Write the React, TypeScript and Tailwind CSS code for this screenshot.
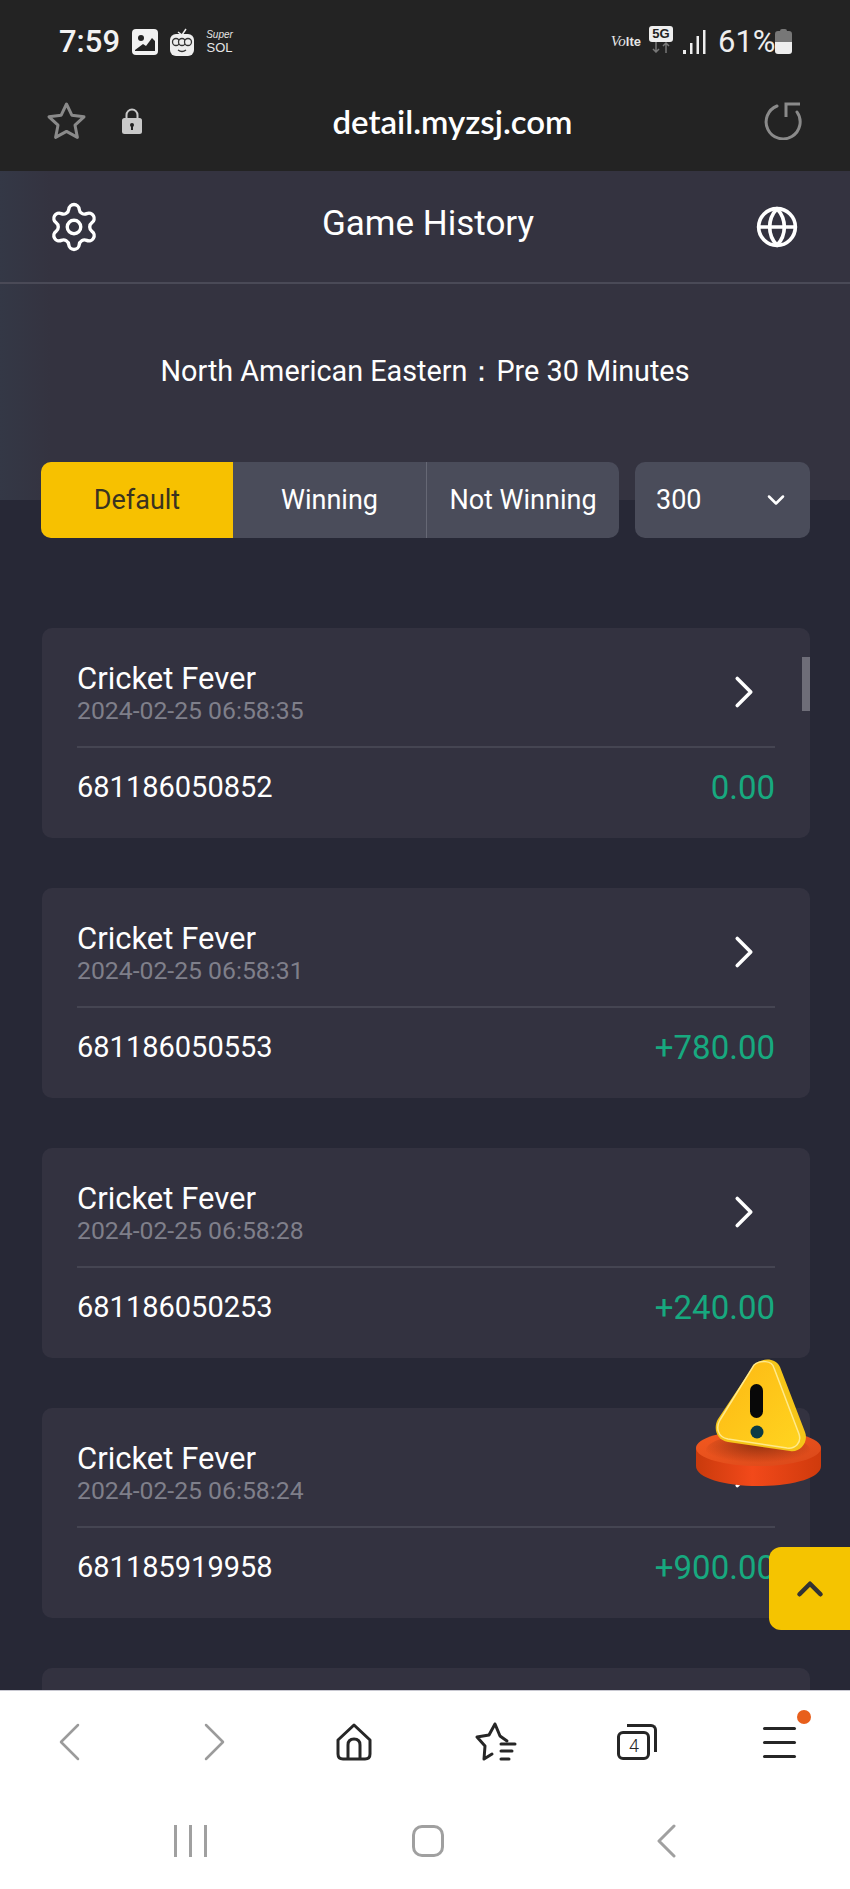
import React from 'react';
import { ChevronDown, ChevronRight, ChevronUp, Globe, Settings } from 'lucide-react';

const records = [
  { time: '2024-02-25 06:58:35', id: '681186050852', amount: '0.00' },
  { time: '2024-02-25 06:58:31', id: '681186050553', amount: '+780.00' },
  { time: '2024-02-25 06:58:28', id: '681186050253', amount: '+240.00' },
  { time: '2024-02-25 06:58:24', id: '681185919958', amount: '+900.00' },
];

const StatusBar = () => (
  <div className="flex h-[81px] items-start justify-between pl-[59px] pr-[58px] pt-[27px] text-white">
    <div className="flex items-center">
      <span className="w-[62px] text-[31px] leading-[30px] font-medium text-[#f2f2f2]">7:59</span>
      <svg className="ml-[11px]" width="26" height="26" viewBox="0 0 26 26">
        <rect width="26" height="26" rx="4" fill="#f1f1f1" />
        <circle cx="9" cy="9" r="3" fill="#222" />
        <path d="M3 21 L11 15 L14 17 L20 9 L23 12 V22 H3 Z" fill="#222" />
      </svg>
      <svg className="ml-[12px]" width="24" height="28" viewBox="0 0 24 28">
        <path d="M8 4 L12 7 L16 1" stroke="#eee" strokeWidth="1.5" fill="none" />
        <rect y="6" width="24" height="22" rx="6" fill="#eee" />
        <circle cx="6" cy="14" r="3.5" fill="#eee" stroke="#333" strokeWidth="1.3" />
        <circle cx="12" cy="14" r="3.5" fill="#eee" stroke="#333" strokeWidth="1.3" />
        <circle cx="18" cy="14" r="3.5" fill="#eee" stroke="#333" strokeWidth="1.3" />
        <path d="M8 22 Q12 25 16 22" stroke="#333" strokeWidth="1.3" fill="none" />
      </svg>
      <div className="ml-[12px] flex w-[27px] flex-col items-center font-['Liberation_Sans',sans-serif] text-[#e6e6e6]">
        <span className="text-[10px] leading-[12px] italic">Super</span>
        <span className="text-[13px] leading-[14px]">SOL</span>
      </div>
    </div>
    <div className="flex items-start">
      <div className="mt-[6px] flex items-baseline font-['Liberation_Serif',serif] text-[#e6e6e6]">
        <span className="text-[15px] leading-[16px] italic">Vo</span>
        <span className="font-['Liberation_Sans',sans-serif] text-[13px] leading-[16px] font-bold">lte</span>
      </div>
      <div className="ml-[8px] -mt-[1px] flex w-[24px] flex-col items-center">
        <span className="flex h-[16px] w-[24px] items-center justify-center rounded-[3px] bg-[#eee] font-['Liberation_Sans',sans-serif] text-[13px] leading-[16px] font-bold text-[#222]">5G</span>
        <svg width="20" height="11" viewBox="0 0 20 11" fill="none" stroke="#777" strokeWidth="1.5">
          <path d="M5 0 V10 M2 7 L5 10 L8 7 M15 11 V1 M12 4 L15 1 L18 4" />
        </svg>
      </div>
      <svg className="ml-[10px] mt-[3px]" width="23" height="24" viewBox="0 0 23 24" fill="#eee">
        <rect x="0" y="20" width="3" height="4" />
        <rect x="7" y="13" width="2.5" height="11" />
        <rect x="13.5" y="6" width="2.5" height="18" />
        <rect x="20" y="0" width="2.5" height="24" />
      </svg>
      <span className="ml-[12px] w-[55px] text-[31px] leading-[30px] text-[#eee]">61%</span>
      <svg className="ml-[2px] mt-[2px]" width="17" height="25" viewBox="0 0 17 25">
        <path d="M5 2 Q5 0 7 0 H10 Q12 0 12 2 H14 Q17 2 17 5 V13 H0 V5 Q0 2 3 2 Z" fill="#777" />
        <path d="M0 13 H17 V22 Q17 25 14 25 H3 Q0 25 0 22 Z" fill="#eee" />
      </svg>
    </div>
  </div>
);

const AddressBar = () => (
  <div className="relative flex h-[90px] items-center justify-between pb-[10px] pl-[46px] pr-[47px]">
    <div className="flex items-center">
      <svg width="41" height="40" viewBox="0 0 41 40" fill="none" stroke="#8a8a8a" strokeWidth="3" strokeLinejoin="round">
        <path d="M20.5 3 L25.8 14.2 L38 15.8 L29 24.2 L31.4 36.4 L20.5 30.4 L9.6 36.4 L12 24.2 L3 15.8 L15.2 14.2 Z" />
      </svg>
      <svg className="ml-[35px]" width="20" height="26" viewBox="0 0 20 26">
        <path d="M4.5 11 V7 a5.5 5.5 0 0 1 11 0 V11" fill="none" stroke="#c9c9c9" strokeWidth="2" />
        <rect y="10" width="20" height="16" rx="2.5" fill="#c9c9c9" />
        <circle cx="10" cy="17" r="2" fill="#222" />
        <rect x="9" y="17" width="2" height="5" fill="#222" />
      </svg>
    </div>
    <span className="font-['Lato',sans-serif] text-[33px] leading-[36px] font-semibold text-white">detail.myzsj.com</span>
    <svg width="40" height="38" viewBox="0 0 40 38" fill="none" stroke="#8a8a8a" strokeWidth="3">
      <path d="M14 4 A17 17 0 1 0 34 10" strokeLinecap="round" />
      <path d="M23 15 V2 H37" />
    </svg>
  </div>
);

const GameCard = ({ time, id, amount }: { time: string; id: string; amount: string }) => (
  <div className="mb-[50px] h-[210px] shrink-0 rounded-[10px] bg-[#333240] px-[35px] font-['Roboto',sans-serif]">
    <div className="flex h-[120px] items-start justify-between border-b-2 border-[#454552] pt-[33px]">
      <div>
        <div className="text-[31px] leading-[36px] text-white">Cricket Fever</div>
        <div className="text-[24.75px] leading-[28px] text-[#7f7f8a]">{time}</div>
      </div>
      <ChevronRight className="mr-[4px] mt-[4px] h-[54px] w-[54px] text-white" strokeWidth={1.6} />
    </div>
    <div className="flex h-[80px] items-center justify-between">
      <span className="text-[29px] text-white">{id}</span>
      <span className="text-[33px] text-[#17a97f]">{amount}</span>
    </div>
  </div>
);

const WarningBadge = () => (
  <svg className="absolute left-[696px] top-[1358px]" width="125" height="128" viewBox="0 0 125 128">
    <defs>
      <linearGradient id="discSide" x1="0" x2="1" y1="0" y2="0">
        <stop offset="0" stopColor="#c93a0c" />
        <stop offset="0.45" stopColor="#f2491a" />
        <stop offset="1" stopColor="#cf3a0c" />
      </linearGradient>
      <linearGradient id="discTop" x1="0" x2="1" y1="0" y2="1">
        <stop offset="0" stopColor="#f4591f" />
        <stop offset="1" stopColor="#d9481a" />
      </linearGradient>
      <radialGradient id="discShade" cx="0.5" cy="0.35" r="0.55">
        <stop offset="0" stopColor="#8f3010" stopOpacity="0.9" />
        <stop offset="1" stopColor="#8f3010" stopOpacity="0" />
      </radialGradient>
      <linearGradient id="tri" x1="0" x2="1" y1="0" y2="1">
        <stop offset="0" stopColor="#fdb813" />
        <stop offset="1" stopColor="#ffd420" />
      </linearGradient>
    </defs>
    <path d="M0 90 V108 C0 120 28 128 62.5 128 S125 120 125 108 V90 Z" fill="url(#discSide)" />
    <ellipse cx="62.5" cy="90" rx="62.5" ry="18" fill="url(#discTop)" />
    <ellipse cx="62" cy="92" rx="52" ry="16" fill="url(#discShade)" />
    <path d="M58 7 C65 0 79 -1 84 9 L109 74 C113 84 104 95 94 93 L32 84 C20 82 17 70 22 61 Z" fill="#f5c518" />
    <path d="M58 7 C64 2 76 2 78 10 L103 76 C106 85 99 91 91 90 L32 81 C21 79 20 69 24 62 Z" fill="url(#tri)" stroke="#ffe98a" strokeWidth="1.5" />
    <rect x="54" y="26" width="13" height="34" rx="6.5" fill="#080808" />
    <circle cx="61" cy="74" r="6.5" fill="#0b3b45" />
  </svg>
);

const BottomBar = () => (
  <div className="relative z-10 h-[199px] shrink-0 border-t border-[#c9c9d2] bg-white">
    <div className="grid h-[96px] grid-cols-6 items-center pt-[6px]">
      <svg className="-ml-[4px] justify-self-center" width="22" height="38" viewBox="0 0 22 38" fill="none" stroke="#9b9b9b" strokeWidth="2.5" strokeLinecap="round" strokeLinejoin="round">
        <path d="M20 2 L3 19 L20 36" />
      </svg>
      <svg className="ml-[6px] justify-self-center" width="22" height="38" viewBox="0 0 22 38" fill="none" stroke="#9b9b9b" strokeWidth="2.5" strokeLinecap="round" strokeLinejoin="round">
        <path d="M2 2 L19 19 L2 36" />
      </svg>
      <svg className="justify-self-center" width="38" height="38" viewBox="0 0 38 38" fill="none" stroke="#262626" strokeWidth="3" strokeLinejoin="round">
        <path d="M19 2 L35 17 V31 Q35 36 30 36 H8 Q3 36 3 31 V17 Z" />
        <path d="M13 36 V22 Q13 16 19 16 Q25 16 25 22 V36" />
      </svg>
      <svg className="justify-self-center" width="42" height="40" viewBox="0 0 42 40" fill="none" stroke="#262626" strokeWidth="3" strokeLinecap="round" strokeLinejoin="round">
        <path d="M32 19 L25 14 L20 2 L14 13 L2 15 L10 24 L9 37 L17 32" />
        <path d="M26 22 H40 M26 29 H37 M26 37 H34" />
      </svg>
      <div className="relative h-[36px] w-[40px] justify-self-center">
        <div className="absolute right-0 top-0 h-[28px] w-[30px] rounded-tr-[6px] border-r-[3px] border-t-[3px] border-[#262626]" />
        <div className="absolute bottom-0 left-0 flex h-[29px] w-[33px] items-center justify-center rounded-[6px] border-[3px] border-[#262626] bg-white font-['Roboto',sans-serif] text-[18px] leading-none font-light text-[#262626]">4</div>
      </div>
      <div className="relative flex w-[33px] flex-col gap-[11px] justify-self-center">
        <span className="h-[3px] rounded-full bg-[#262626]" />
        <span className="h-[3px] rounded-full bg-[#262626]" />
        <span className="h-[3px] rounded-full bg-[#262626]" />
        <span className="absolute right-[-15px] top-[-17px] h-[14px] w-[14px] rounded-full bg-[#e85f1c]" />
      </div>
    </div>
    <div className="grid h-[102px] grid-cols-3 items-center pl-[71px] pr-[65px] pt-[6px]">
      <div className="flex h-[32px] justify-center gap-[12px]">
        <span className="w-[3px] bg-[#a0a0a0]" />
        <span className="w-[3px] bg-[#a0a0a0]" />
        <span className="w-[3px] bg-[#a0a0a0]" />
      </div>
      <div className="h-[32px] w-[32px] justify-self-center rounded-[10px] border-[3px] border-[#a0a0a0]" />
      <svg className="justify-self-center" width="20" height="34" viewBox="0 0 20 34" fill="none" stroke="#a0a0a0" strokeWidth="3" strokeLinecap="round" strokeLinejoin="round">
        <path d="M18 2 L3 17 L18 32" />
      </svg>
    </div>
  </div>
);

export default function App() {
  return (
    <div className="relative flex h-[1889px] w-[850px] flex-col overflow-hidden bg-[#272836] font-['Roboto',sans-serif]">
      <div className="h-[171px] shrink-0 bg-[#232323]">
        <StatusBar />
        <AddressBar />
      </div>

      <div className="min-h-0 flex-1 overflow-hidden">
        <div className="h-[329px] bg-linear-to-r from-[#343846] to-[#343340] to-[6%]">
          <div className="flex h-[113px] items-center justify-between border-b-2 border-[#4a4a57] pl-[47px] pr-[51px] text-white">
            <Settings className="h-[54px] w-[54px]" strokeWidth={1.5} />
            <h1 className="-mt-[5px] text-[35px] font-normal">Game History</h1>
            <Globe className="h-[44px] w-[44px]" strokeWidth={2} />
          </div>
          <p className="pt-[69px] text-center text-[28.8px] leading-[36px] text-white">North American Eastern：Pre 30 Minutes</p>
        </div>

        <div className="-mt-[38px] flex pl-[41px] pr-[40px]">
          <div className="flex h-[76px] w-[578px] overflow-hidden rounded-[10px] bg-[#4a4c5a] text-[27px] text-white">
            <div className="flex w-[192px] items-center justify-center bg-[#f7c100] text-[#3a3320]">Default</div>
            <div className="flex w-[194px] items-center justify-center border-r border-[#666875]">Winning</div>
            <div className="flex flex-1 items-center justify-center">Not Winning</div>
          </div>
          <div className="ml-[16px] flex h-[76px] flex-1 items-center justify-between rounded-[10px] bg-[#4a4c5a] pl-[21px] pr-[20px] text-[27px] text-white">
            <span>300</span>
            <ChevronDown className="h-[28px] w-[28px]" strokeWidth={2.2} />
          </div>
        </div>

        <div className="flex flex-col pl-[42px] pr-[40px] pt-[90px]">
          {records.map((r) => (
            <GameCard key={r.id} {...r} />
          ))}
          <div className="h-[60px] rounded-t-[10px] bg-[#333240]" />
        </div>
      </div>

      <BottomBar />

      <div className="absolute left-[802px] top-[657px] h-[54px] w-[8px] bg-[#6e6d78]" />
      <WarningBadge />
      <div className="absolute right-0 top-[1547px] flex h-[83px] w-[81px] items-center justify-center rounded-l-[12px] bg-[#f5c400] text-[#333]">
        <ChevronUp className="h-[42px] w-[42px]" strokeWidth={2.6} />
      </div>
    </div>
  );
}
